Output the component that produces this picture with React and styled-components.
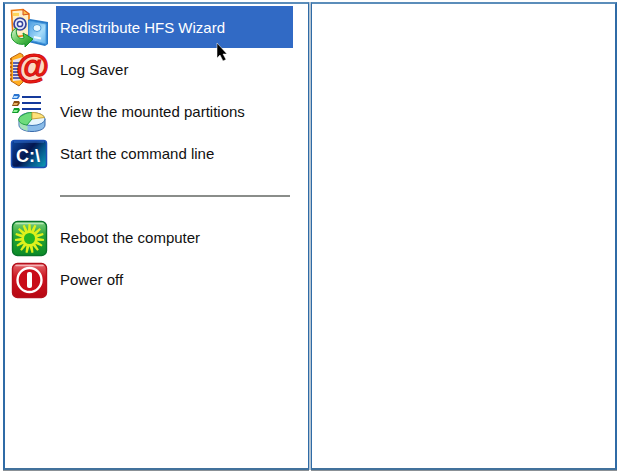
import styled, { createGlobalStyle } from 'styled-components';

const RedistributeIcon = () => (
  <Icon viewBox="0 0 40 42" aria-hidden="true">
    <defs>
      <linearGradient id="driveFace" x1="0" y1="0" x2="1" y2="1">
        <stop offset="0" stopColor="#4a9be0" />
        <stop offset="0.6" stopColor="#a6dcfa" />
        <stop offset="1" stopColor="#5fb0ea" />
      </linearGradient>
      <linearGradient id="greenArrow" x1="0" y1="0" x2="1" y2="1">
        <stop offset="0" stopColor="#e2f8da" />
        <stop offset="0.5" stopColor="#58c452" />
        <stop offset="1" stopColor="#0f8a20" />
      </linearGradient>
    </defs>
    <path d="M2.5 4.5 14 3.5 20 8v21L4 31z" fill="#fff0c8" stroke="#ee7a12" strokeWidth="1.6" />
    <path d="M14 3.5V9l6-1z" fill="#ffc04a" stroke="#d8501c" />
    <path d="M4 7h6v3H4z" fill="#ffd65a" />
    <circle cx="11" cy="18" r="6" fill="#e4e8fa" stroke="#33429c" strokeWidth="1.7" />
    <circle cx="11" cy="18" r="2.6" fill="#fff" stroke="#33429c" strokeWidth="1.5" />
    <path d="m19 14 2-1 18 3v22l-3 2-17-4z" fill="#2a7cc8" />
    <path d="m20 15 17 3v20l-17-4z" fill="url(#driveFace)" stroke="#4a9de0" />
    <ellipse cx="28" cy="22" rx="4" ry="3.5" fill="#e8f8ff" stroke="#4b9bd8" />
    <path d="m25 31 7 1.5" stroke="#f2fcff" strokeWidth="2" />
    <path
      d="M8 22C2 24 1 30 4 34c3 4 8 5 12 4v3l8-8-10-6 1 5c-3 1-6 0-7-3s-1-5 0-7z"
      fill="url(#greenArrow)"
      stroke="#159329"
    />
  </Icon>
);

const LogIcon = () => (
  <Icon viewBox="0 0 40 42" aria-hidden="true">
    <path d="m2 10 9-5 3 2v27l-4 4-8-5z" fill="#ffad21" stroke="#b86518" />
    <path d="m4 12 10-3v23l-10 1z" fill="#e9e5ec" />
    <path d="M4 15h9M4 18h9M4 21h9M4 24h9M4 27h9M4 30h9" stroke="#26369c" strokeWidth="1.4" />
    <path d="M2 10v23" stroke="#c46a10" strokeWidth="2" strokeDasharray="2 2" />
    <circle cx="24" cy="20" r="13" fill="#fbd9c4" />
    <AtSign x="23" y="30">@</AtSign>
  </Icon>
);

const PartitionsIcon = () => (
  <Icon viewBox="0 0 40 42" aria-hidden="true">
    <path d="M13 7h19M13 13h19M13 19h19" stroke="#153a9c" strokeWidth="2" />
    <path d="M5 4h5l1 2-2 3H3z" fill="#2a74d0" />
    <path d="M5 6h4l-1 2H4z" fill="#b4dcff" />
    <path d="M5 11h5l1 2-2 3H3z" fill="#8a4d10" />
    <path d="M5 13h4l-1 2H4z" fill="#e8b060" />
    <path d="M5 18h5l1 2-2 3H3z" fill="#109a2a" />
    <path d="M5 20h4l-1 2H4z" fill="#8cf094" />
    <path d="M10 29v6c0 4 6 6.5 13 6.5S36 39 36 35v-6z" fill="#8abce8" stroke="#3768aa" />
    <path d="M10.5 30c1 3 4 5 8 5.5V41c-4-1-8-3-8-6z" fill="#a6e2b8" />
    <ellipse cx="23" cy="29" rx="13" ry="6.5" fill="#e6f5fd" stroke="#3f77b5" />
    <path d="m23 29-5 6c-9-1-11-7-4-10 3-2 6-2.5 9-2.5z" fill="#6ddc7c" stroke="#26a345" />
    <path d="M23 29v-6.5c6 0 11 2 12.5 5z" fill="#ffe27a" stroke="#c9a53a" />
  </Icon>
);

const ConsoleIcon = () => (
  <Icon viewBox="0 0 40 42" aria-hidden="true">
    <defs>
      <linearGradient id="console" x1="0" y1="0.2" x2="1" y2="0.8">
        <stop offset="0" stopColor="#0c3f92" />
        <stop offset="0.45" stopColor="#04164f" />
        <stop offset="0.7" stopColor="#04558a" />
        <stop offset="1" stopColor="#0a8fae" />
      </linearGradient>
    </defs>
    <rect x="2.5" y="8.5" width="35" height="27" rx="3" fill="url(#console)" stroke="#1c50b4" strokeWidth="1.5" />
    <path d="M5 10h30" stroke="#2e6bc8" />
    <Prompt x="19" y="30">C:\</Prompt>
  </Icon>
);

const RebootIcon = () => (
  <Icon viewBox="0 0 40 42" aria-hidden="true">
    <defs>
      <linearGradient id="reboot" x1="0" y1="0" x2="0" y2="1">
        <stop offset="0" stopColor="#7fd080" />
        <stop offset="0.4" stopColor="#2aa634" />
        <stop offset="1" stopColor="#0a8a28" />
      </linearGradient>
    </defs>
    <rect x="3.5" y="5.5" width="34" height="34" rx="5" fill="url(#reboot)" stroke="#08742a" strokeWidth="1.4" />
    <path d="M7 7.5h27" stroke="#b4e8b4" strokeWidth="1.5" strokeLinecap="round" />
    <g transform="translate(20.5 22.5)" fill="#dff01c">
      {[0, 24, 48, 72, 96, 120, 144, 168, 192, 216, 240, 264, 288, 312, 336].map(angle => (
        <path key={angle} d="M-1.6-7-1-14.5H1L1.6-7z" transform={`rotate(${angle})`} />
      ))}
      <circle r="8" />
      <circle r="5.5" fill="#24b423" />
    </g>
  </Icon>
);

const PowerIcon = () => (
  <Icon viewBox="0 0 40 42" aria-hidden="true">
    <defs>
      <linearGradient id="power" x1="0" y1="0" x2="0" y2="1">
        <stop offset="0" stopColor="#e4686c" />
        <stop offset="0.4" stopColor="#cc1420" />
        <stop offset="1" stopColor="#b80712" />
      </linearGradient>
    </defs>
    <rect x="3.5" y="5.5" width="34" height="34" rx="5" fill="url(#power)" stroke="#b4101c" strokeWidth="1.4" />
    <path d="M7 7.5h27" stroke="#f4b4b6" strokeWidth="1.5" strokeLinecap="round" />
    <circle cx="20.5" cy="22" r="12" fill="#c90c18" stroke="#fff" strokeWidth="2.4" />
    <rect x="18" y="14" width="5" height="16" rx="2" fill="#fff" />
  </Icon>
);

const tools = [
  { label: 'Redistribute HFS Wizard', icon: RedistributeIcon, selected: true },
  { label: 'Log Saver', icon: LogIcon },
  { label: 'View the mounted partitions', icon: PartitionsIcon },
  { label: 'Start the command line', icon: ConsoleIcon },
];

const powerActions = [
  { label: 'Reboot the computer', icon: RebootIcon },
  { label: 'Power off', icon: PowerIcon },
];

const MenuItem = ({ label, icon: ItemIcon, selected }) => (
  <ItemButton type="button">
    <ItemIcon />
    <Label $selected={selected}>
      {label}
      {selected ? (
        <Pointer viewBox="0 0 12 20" aria-hidden="true">
          <path d="M1 1v15l3-3 3 6 3-1.5-3-5.5h4z" fill="#000" stroke="#fff" strokeWidth="0.5" />
        </Pointer>
      ) : null}
    </Label>
  </ItemButton>
);

const App = () => (
  <>
    <GlobalStyle />
    <Screen>
      <MenuPanel>
        {tools.map(item => (
          <MenuItem key={item.label} {...item} />
        ))}
        <Separator />
        {powerActions.map(item => (
          <MenuItem key={item.label} {...item} />
        ))}
      </MenuPanel>
      <DetailsPanel />
    </Screen>
  </>
);

export default App;

const GlobalStyle = createGlobalStyle`
  * {
    box-sizing: border-box;
  }

  body {
    margin: 0;
    background-color: #fff;
    font-family: 'Liberation Sans', Arial, sans-serif;
  }
`;

const Screen = styled.main`
  display: grid;
  grid-template-columns: 1fr 1fr;
  gap: 2px;
  min-height: 100vh;
  padding: 2px 3px;
`;

const Panel = styled.section`
  border: 2px solid #2f6ba6;
  border-top-color: #5b8dba;
  border-bottom-color: #41719c;
  box-shadow: 0 1px 0 #8b9196;
`;

const MenuPanel = styled(Panel).attrs({ as: 'nav' })`
  display: flex;
  flex-direction: column;
  padding: 2px 15px 0 4px;
  border-right-width: 1px;
  box-shadow: 2px 0 0 #b4c4d2, 0 1px 0 #8b9196;
`;

const DetailsPanel = styled(Panel)`
  border-left-width: 1px;
`;

const ItemButton = styled.button`
  display: flex;
  height: 42px;
  padding: 0;
  gap: 7px;
  border: none;
  background: none;
  font-family: inherit;
  text-align: left;
`;

const Icon = styled.svg`
  flex: none;
  width: 40px;
  height: 42px;
  fill: none;
`;

const Label = styled.span`
  position: relative;
  flex: 1;
  height: 42px;
  padding-left: 4px;
  font-size: 15px;
  line-height: 44px;
  white-space: nowrap;
  color: ${props => (props.$selected ? '#fff' : '#111')};
  background-color: ${props => (props.$selected ? '#316ac5' : 'transparent')};
`;

const Pointer = styled.svg`
  position: absolute;
  top: 36px;
  left: 160px;
  width: 12px;
  height: 20px;
  z-index: 1;
`;

const Separator = styled.hr`
  align-self: stretch;
  height: 2px;
  margin: 21px 3px 19px 51px;
  border: none;
  background-color: #8a8d8a;
`;

const AtSign = styled.text`
  font: italic bold 34px 'Liberation Sans', sans-serif;
  text-anchor: middle;
  fill: #ee1c14;
  stroke: #d0100c;
  stroke-width: 1px;
`;

const Prompt = styled.text`
  font: bold 18px 'Liberation Sans', sans-serif;
  text-anchor: middle;
  fill: #fff;
`;
